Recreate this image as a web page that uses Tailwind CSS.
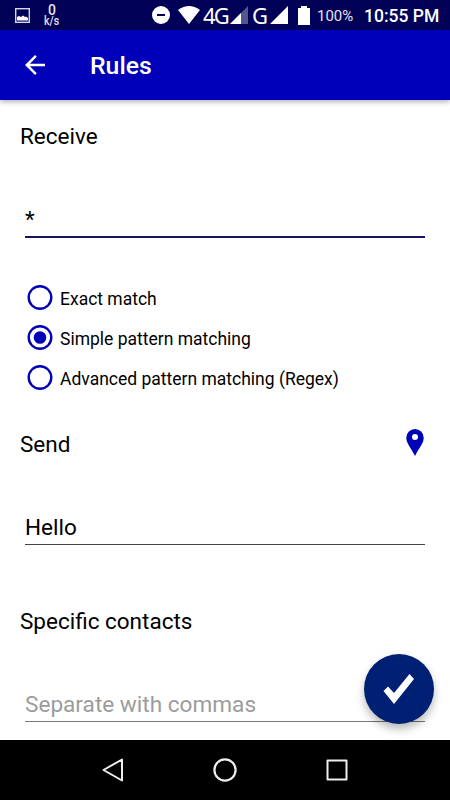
<!DOCTYPE html>
<html lang="en">
<head>
<meta charset="utf-8">
<title>Rules</title>
<script src="https://cdn.jsdelivr.net/npm/@tailwindcss/browser@4"></script>
</head>
<body class="font-['Roboto',sans-serif]">
<div class="relative flex h-[800px] w-[450px] flex-col overflow-hidden bg-white text-black">
  <header class="z-10 shrink-0 shadow-[0_2px_5px_rgba(0,0,0,0.3)]">
    <div class="flex h-[30px] items-center bg-[#000056] text-white">
      <svg class="ml-[15px] size-[15px]" viewBox="0 0 15 15"><rect x=".7" y=".7" width="13.6" height="13.6" fill="none" stroke="#d5d5e3" stroke-width="1.4"/><path d="M2 12.500V9l2-1 2 1 2-1.500 2 1.500 1-.5 2 1.500v2.500z" fill="#fff"/></svg>
      <div class="ml-[13px] flex h-[26px] w-[18px] flex-col items-center pt-[2px] font-medium text-[#e4e4ee]">
        <span class="h-[11px] text-[14px] leading-[13px]">0</span>
        <span class="h-[13px] scale-x-[0.88] text-[12px] leading-[13px]">k/s</span>
      </div>
      <svg class="ml-[91px] size-[18px]" viewBox="0 0 18 18"><circle cx="9" cy="9" r="9" fill="#fff"/><path d="M5 8h8v2H5z" fill="#000056"/></svg>
      <svg class="ml-[8px] h-[18px] w-[22px]" viewBox="0 0 22 18"><path d="M11 18L0 4Q11-4 22 4z" fill="#fff"/></svg>
      <span class="ml-[3px] w-[24px] whitespace-nowrap font-['Noto_Sans',sans-serif] text-[22px] leading-[30px] tracking-[-1.800px]">4G</span>
      <svg class="ml-[3px] size-[18px]" viewBox="0 0 18 18"><path d="M0 18L18 0v18z" fill="#56568f"/><path d="M0 18L11 7v11z" fill="#fff"/></svg>
      <span class="ml-[4px] w-[14px] font-['Noto_Sans',sans-serif] text-[22px] leading-[30px]">G</span>
      <svg class="ml-[4px] size-[18px]" viewBox="0 0 18 18"><path d="M0 18L18 0v18z" fill="#fff"/></svg>
      <svg class="ml-[10px] h-[19px] w-[12px]" viewBox="0 0 12 19"><path d="M3 0h6v2h3v17H0V2h3z" fill="#fff"/></svg>
      <span class="ml-[7px] w-[36px] whitespace-nowrap pt-[2px] text-[15px] leading-[28px] text-[#e4e4ee]">100%</span>
      <span class="ml-[11px] whitespace-nowrap pt-[2px] text-[17.500px] font-medium leading-[28px]">10:55 PM</span>
    </div>
    <div class="flex h-[70px] items-center bg-[#0000b8] text-white">
      <svg class="ml-[25px] size-5" viewBox="0 0 20 20" fill="none" stroke="#fff" stroke-width="2.5"><path d="M20 10H2M10.9.9L1.8 10l9.1 9.1"/></svg>
      <h1 class="ml-[45px] pt-[2px] text-[24.800px] font-medium leading-[30px]">Rules</h1>
    </div>
  </header>

  <main class="h-[640px] shrink-0 px-5 pt-[21px] text-[22.5px] leading-[30px]">
    <h2>Receive</h2>
    <div class="mx-[5px] mt-[53px] h-[34px] border-b-2 border-[#15155f]">*</div>
    <div class="mt-[39.5px] text-[17.5px]">
      <div class="flex h-10 items-center">
        <svg class="ml-[7px] size-[26px]" viewBox="0 0 26 26"><circle cx="13" cy="12.500" r="11.3" fill="none" stroke="#0000b8" stroke-width="2.4"/></svg>
        <span class="ml-[7px] pt-[2px]">Exact match</span>
      </div>
      <div class="flex h-10 items-center">
        <svg class="ml-[7px] size-[26px]" viewBox="0 0 26 26"><circle cx="13" cy="12.500" r="11.3" fill="none" stroke="#0000b8" stroke-width="2.4"/><circle cx="13" cy="12.500" r="6.3" fill="#0000b8"/></svg>
        <span class="ml-[7px] pt-[2px]">Simple pattern matching</span>
      </div>
      <div class="flex h-10 items-center">
        <svg class="ml-[7px] size-[26px]" viewBox="0 0 26 26"><circle cx="13" cy="12.500" r="11.3" fill="none" stroke="#0000b8" stroke-width="2.4"/></svg>
        <span class="ml-[7px] pt-[2px]">Advanced pattern matching (Regex)</span>
      </div>
    </div>
    <div class="mt-[31.5px] flex h-[30px] items-center justify-between">
      <h2>Send</h2>
      <svg class="mr-[6px] mb-[3px] h-[27px] w-[18px]" viewBox="0 0 18 27"><path fill-rule="evenodd" d="M9 0a8.700 8.700 0 0 0-8.700 8.700C.3 14 4.800 18.500 9 27c4.200-8.500 8.700-13 8.700-18.300A8.700 8.700 0 0 0 9 0zm0 5a3 3 0 1 1 0 6 3 3 0 0 1 0-6z" fill="#0000b8"/></svg>
    </div>
    <div class="mx-[5px] mt-[53px] h-[33px] border-b border-[#444]">Hello</div>
    <h2 class="mt-[61px]">Specific contacts</h2>
    <div class="mx-[5px] mt-[54px] h-[32px] border-b border-[#777] text-[22.600px] text-[#9c9c9c]">Separate with commas</div>
  </main>

  <button aria-label="Save" class="absolute left-[364px] top-[654px] flex size-[70px] items-center justify-center rounded-full bg-[#002074] pr-[2px] shadow-[0_5px_9px_rgba(0,0,0,0.28)]">
    <svg class="h-[30px] w-[31px]" viewBox="0 0 31 30"><path d="M.5 17L5 12.500l6 6.500L26.500 0 31 5 11 30z" fill="#fff"/></svg>
  </button>

  <nav class="z-10 flex h-[60px] shrink-0 items-center justify-between bg-black px-[102px]">
    <svg class="h-6 w-[22px]" viewBox="0 0 22 24" fill="none" stroke="#eee" stroke-width="2" stroke-linejoin="round"><path d="M20 1.500v21L1.500 12z"/></svg>
    <svg class="size-6" viewBox="0 0 24 24" fill="none" stroke="#eee" stroke-width="2.200"><circle cx="12" cy="12" r="10.600"/></svg>
    <svg class="size-[22px]" viewBox="0 0 22 22" fill="none" stroke="#eee" stroke-width="2" stroke-linejoin="round"><path d="M1.500 1.500h19v19h-19z"/></svg>
  </nav>
</div>
</body>
</html>
